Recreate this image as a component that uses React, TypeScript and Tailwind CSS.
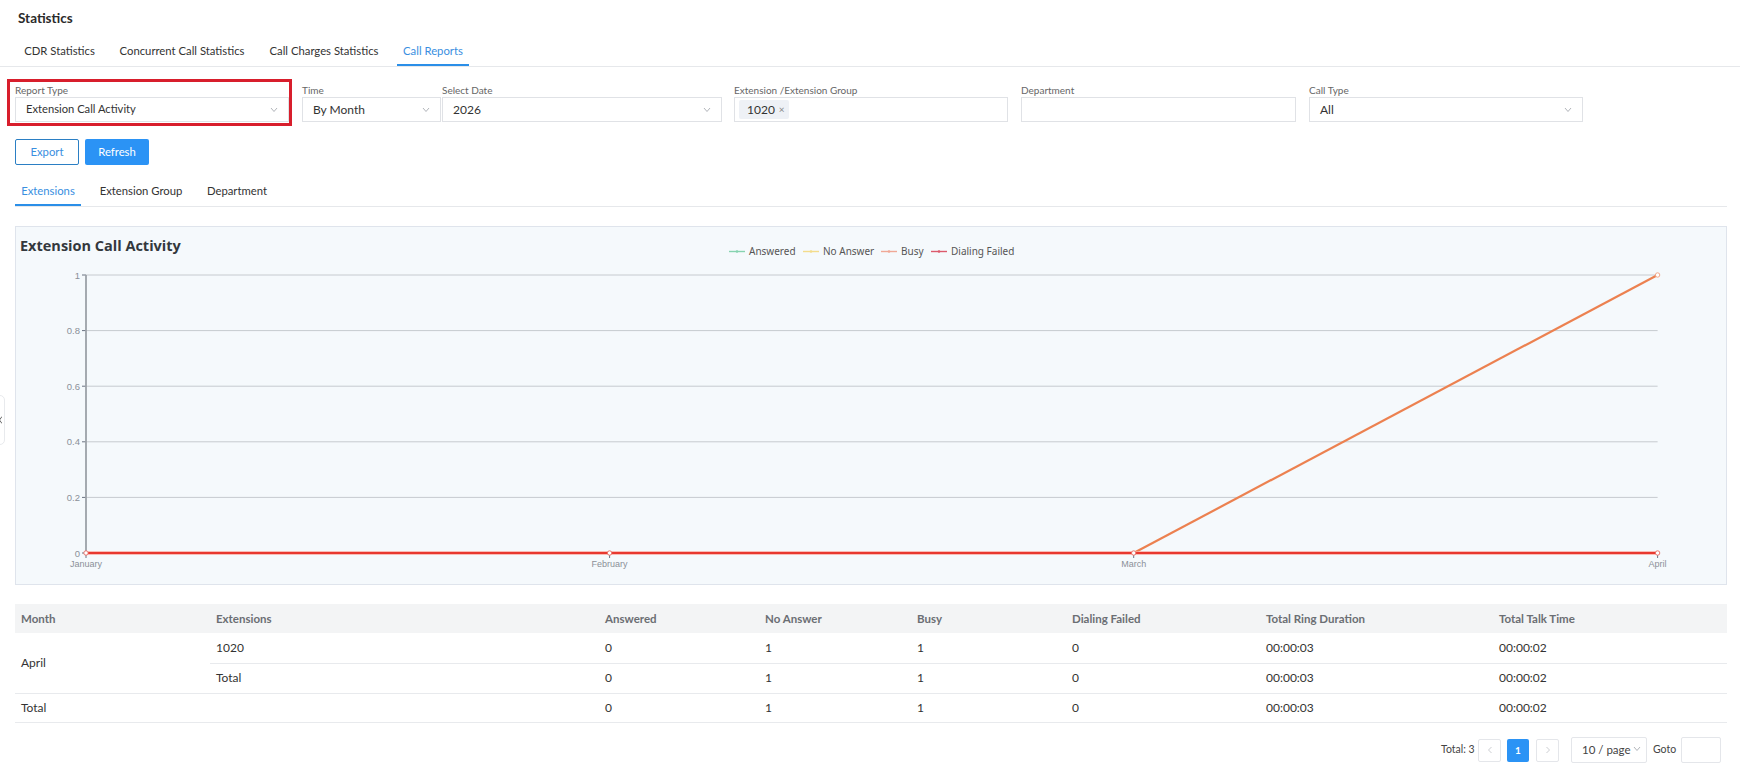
import React from "react";

const Chevron = () => (
  <svg width="8" height="6" viewBox="0 0 8 6" fill="none" stroke="#a8abb2" strokeWidth="0.9">
    <polyline points="1,1 4,4.5 7,1" />
  </svg>
);

const Field = ({ label, width, children, chevron, gap = "", text = "text-[12px]" }: { label: string; width: string; children?: React.ReactNode; chevron?: boolean; gap?: string; text?: string }) => (
  <div className={`flex flex-col shrink-0 ${width} ${gap}`}>
    <div className="h-[14px] text-[10px] leading-[14px] text-[#666]">{label}</div>
    <div className={`h-[25px] border border-[#e0e2e6] bg-white flex items-center justify-between text-[#333] pl-[10px] pr-[10px] ${text}`}>
      <div className="flex items-center">{children}</div>
      {chevron && <Chevron />}
    </div>
  </div>
);

const Tab = ({ children, active, cls }: { children: React.ReactNode; active?: boolean; cls: string }) => (
  <div className={`flex items-center justify-center whitespace-nowrap text-[11.3px] pt-[2px] h-full border-b-2 ${cls} ${active ? "border-[#2b8fe8] text-[#3a8fdf]" : "border-transparent text-[#333]"}`}>
    {children}
  </div>
);

const yTicks: [string, number][] = [["1", 275], ["0.8", 330.6], ["0.6", 386.2], ["0.4", 441.8], ["0.2", 497.4], ["0", 553]];
const xTicks: [string, number][] = [["January", 86], ["February", 609.6], ["March", 1133.7], ["April", 1657.6]];
const legend: [string, string, number, number][] = [
  ["Answered", "#86d3b0", 729, 749],
  ["No Answer", "#f3dc8c", 803, 823],
  ["Busy", "#f0a896", 881, 901],
  ["Dialing Failed", "#dc5a6c", 931, 951],
];

const Chart = () => (
  <div className="h-[359px] border border-[#dfe4ec] bg-[#f5f9fc]">
    <svg width="1710" height="357" viewBox="16 227 1710 357" className="block">
      <text x="20" y="251" fontSize="14.5" fontWeight="700" fill="#33383d" fontFamily="'Open Sans', sans-serif">Extension Call Activity</text>
      {legend.map(([t, c, lx, tx]) => (
        <g key={t}>
          <line x1={lx} x2={lx + 16} y1="251.5" y2="251.5" stroke={c} strokeWidth="1.4" />
          <circle cx={lx + 8} cy="251.5" r="1.3" fill={c} />
          <text x={tx} y="255" fontSize="10" fill="#555" fontFamily="'Noto Sans', sans-serif">{t}</text>
        </g>
      ))}
      {yTicks.map(([t, y]) => (
        <g key={t}>
          {t !== "0" && <line x1="86" x2="1657.6" y1={y} y2={y} stroke="#c6cacf" strokeWidth="1" />}
          <line x1="82" x2="86" y1={y} y2={y} stroke="#6b7280" strokeWidth="1" />
          <text x="80" y={y + 3.5} fontSize="9.5" textAnchor="end" fill="#8b9098" fontFamily="'Liberation Sans', sans-serif">{t}</text>
        </g>
      ))}
      <line x1="86" x2="86" y1="275" y2="553" stroke="#9ca1a8" strokeWidth="1.8" />
      {xTicks.map(([t, x]) => (
        <g key={t}>
          <line x1={x} x2={x} y1="553" y2="558" stroke="#6b7280" strokeWidth="1" />
          <text x={x} y="567" fontSize="9" textAnchor="middle" fill="#8b9098" fontFamily="'Liberation Sans', sans-serif">{t}</text>
        </g>
      ))}
      <line x1="1133.7" y1="553" x2="1657.6" y2="275" stroke="#ec8150" strokeWidth="2.2" />
      <circle cx="1657.6" cy="275" r="2.2" fill="#fff" stroke="#f0a080" strokeWidth="0.9" />
      <line x1="86" x2="1657.6" y1="553" y2="553" stroke="#f9a8a0" strokeWidth="3.4" />
      <line x1="86" x2="1657.6" y1="553" y2="553" stroke="#e8382f" strokeWidth="1.8" />
      {xTicks.map(([t, x]) => (
        <circle key={t} cx={x} cy="553" r="2.2" fill="#fff" stroke="#e8685f" strokeWidth="0.9" />
      ))}
    </svg>
  </div>
);

const Cell = ({ children }: { children?: React.ReactNode }) => (
  <td className="px-[6px] align-middle border-b border-[#e8eaed]">{children}</td>
);

const Nums = () => (
  <>
    <Cell>0</Cell>
    <Cell>1</Cell>
    <Cell>1</Cell>
    <Cell>0</Cell>
    <Cell>00:00:03</Cell>
    <Cell>00:00:02</Cell>
  </>
);

const headers = ["Month", "Extensions", "Answered", "No Answer", "Busy", "Dialing Failed", "Total Ring Duration", "Total Talk Time"];

const DataTable = () => (
  <table className="mt-[19px] w-[1712px] table-fixed border-collapse text-[12px] text-[#333]">
    <colgroup>
      <col className="w-[195px]" />
      <col className="w-[389px]" />
      <col className="w-[160px]" />
      <col className="w-[152px]" />
      <col className="w-[155px]" />
      <col className="w-[194px]" />
      <col className="w-[233px]" />
      <col className="w-[234px]" />
    </colgroup>
    <thead>
      <tr className="h-[29px] bg-[#f3f4f5]">
        {headers.map((h) => (
          <th key={h} className="px-[6px] text-left font-bold text-[11.5px] text-[#6b6e73]">{h}</th>
        ))}
      </tr>
    </thead>
    <tbody>
      <tr className="h-[30px]">
        <td rowSpan={2} className="px-[6px] align-middle border-b border-[#e8eaed]">April</td>
        <Cell>1020</Cell>
        <Nums />
      </tr>
      <tr className="h-[30px]">
        <Cell>Total</Cell>
        <Nums />
      </tr>
      <tr className="h-[29px]">
        <Cell>Total</Cell>
        <Cell />
        <Nums />
      </tr>
    </tbody>
  </table>
);

const PageBtn = ({ dir }: { dir: "l" | "r" }) => (
  <div className="w-[23px] h-[23px] border border-[#e4e6ea] rounded-[2px] flex items-center justify-center">
    <svg width="6" height="8" viewBox="0 0 6 8" fill="none" stroke="#c4c7cc" strokeWidth="0.9">
      <polyline points={dir === "l" ? "4.5,1 1.5,4 4.5,7" : "1.5,1 4.5,4 1.5,7"} />
    </svg>
  </div>
);

export default function App() {
  return (
    <div className="relative w-[1740px] h-[776px] overflow-hidden bg-white font-['Lato',sans-serif] text-[#333]">
      <div className="h-[36px] pl-[18px] flex items-center text-[13.5px] font-bold text-[#2b2b2b]">Statistics</div>

      <div className="h-[31px] border-b border-[#e6e8eb] flex pl-[17px]">
        <Tab cls="w-[85px]">CDR Statistics</Tab>
        <Tab cls="w-[144px] ml-[8px]">Concurrent Call Statistics</Tab>
        <Tab cls="w-[128px] ml-[6px]">Call Charges Statistics</Tab>
        <Tab active cls="w-[72px] ml-[9px]">Call Reports</Tab>
      </div>

      <div className="pl-[15px] pr-[13px]">
        <div className="mt-[16px] flex">
          <div className="relative">
            <Field label="Report Type" width="w-[274px]" chevron text="text-[11.2px]">
              Extension Call Activity
            </Field>
            <div className="absolute left-[-8px] top-[-4px] w-[285px] h-[47px] border-[3px] border-[#d81e2c] pointer-events-none" />
          </div>
          <Field label="Time" width="w-[139px]" gap="ml-[13px]" chevron>By Month</Field>
          <Field label="Select Date" width="w-[280px]" gap="ml-[1px]" chevron>2026</Field>
          <div className="shrink-0 ml-[12px] w-[274px] flex flex-col">
            <div className="h-[14px] text-[10px] leading-[14px] text-[#666]">Extension /Extension Group</div>
            <div className="h-[25px] border border-[#e0e2e6] bg-white flex items-center pl-[4px]">
              <div className="h-[19px] w-[50px] bg-[#eef1f6] rounded-[2px] flex items-center pl-[8px] text-[12px] text-[#333]">
                1020
                <span className="ml-[4px] text-[10px] text-[#888]">×</span>
              </div>
            </div>
          </div>
          <Field label="Department" width="w-[275px]" gap="ml-[13px]" />
          <Field label="Call Type" width="w-[274px]" gap="ml-[13px]" chevron>All</Field>
        </div>

        <div className="mt-[17px] flex gap-[6px]">
          <div className="w-[64px] h-[26px] border border-[#2b7fc4] rounded-[2px] flex items-center justify-center text-[11.3px] text-[#3a8fdf]">Export</div>
          <div className="w-[64px] h-[26px] bg-[#2b93f5] rounded-[2px] flex items-center justify-center text-[11.3px] text-white">Refresh</div>
        </div>

        <div className="mt-[11px] h-[31px] border-b border-[#e6e8eb] flex">
          <Tab active cls="w-[66px]">Extensions</Tab>
          <Tab cls="w-[90px] ml-[15px]">Extension Group</Tab>
          <Tab cls="w-[70px] ml-[16px]">Department</Tab>
        </div>

        <div className="mt-[19px]">
          <Chart />
        </div>

        <DataTable />

        <div className="mt-[14px] flex items-center h-[27px] text-[#444]">
          <span className="ml-[1426px] text-[10.5px] w-[37px] whitespace-nowrap">Total: 3</span>
          <PageBtn dir="l" />
          <div className="ml-[6px] w-[22px] h-[23px] bg-[#2b93f5] rounded-[2px] text-white text-[10px] font-bold flex items-center justify-center">1</div>
          <div className="ml-[7px]"><PageBtn dir="r" /></div>
          <div className="ml-[12px] w-[76px] h-[26px] border border-[#e4e6ea] rounded-[2px] flex items-center pl-[10px] text-[11.5px] whitespace-nowrap">
            10 / page
            <span className="ml-[2px] mb-[3px]"><Chevron /></span>
          </div>
          <span className="ml-[6px] text-[10.5px] w-[28px]">Goto</span>
          <div className="w-[40px] h-[26px] border border-[#e4e6ea] rounded-[2px]" />
        </div>
      </div>

      <div className="absolute left-[-10px] top-[395px] w-[15px] h-[50px] border border-[#e8eaed] rounded-[5px] bg-white flex items-center justify-end pr-[2px]">
        <svg width="3" height="8" viewBox="0 0 3 8" fill="none" stroke="#555" strokeWidth="0.9">
          <polyline points="3,0.5 0.5,4 3,7.5" />
        </svg>
      </div>
    </div>
  );
}
